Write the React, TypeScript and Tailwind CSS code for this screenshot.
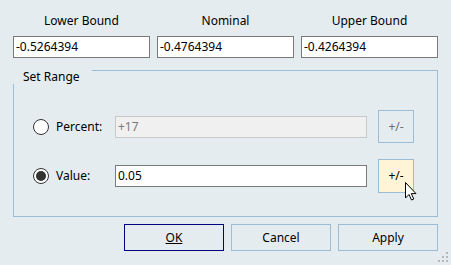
import React from "react";

function Radio({ checked }: { checked?: boolean }) {
  return (
    <span className="flex h-4 w-4 shrink-0 items-center justify-center rounded-full border border-[#333] bg-white">
      {checked && <span className="h-[10px] w-[10px] rounded-full bg-[#333]" />}
    </span>
  );
}

function Cursor() {
  return (
    <svg width="12" height="19" viewBox="0 0 12 19" className="absolute left-[26px] top-[22px]">
      <path d="M0.5 0.5V16L4 12.5L6.5 18L8.8 17L6.3 11.6H11Z" fill="#fff" stroke="#000" strokeWidth="1" strokeLinejoin="round" />
    </svg>
  );
}

function Grip() {
  const dots = [
    [8, 0], [8, 4], [4, 4], [8, 8], [4, 8], [0, 8],
  ];
  return (
    <svg width="11" height="11" viewBox="0 0 11 11" className="absolute bottom-[2px] right-[2px]">
      {dots.map(([x, y]) => (
        <rect key={`${x}-${y}`} x={x} y={y} width="2" height="2" fill="#b5b9bc" />
      ))}
    </svg>
  );
}

export default function App() {
  const bounds = [
    { label: "Lower Bound", value: "-0.5264394" },
    { label: "Nominal", value: "-0.4764394" },
    { label: "Upper Bound", value: "-0.4264394" },
  ];

  return (
    <div
      className="relative h-[265px] w-[451px] bg-[#e5ecf0] px-[13px] pt-[12px] text-[12px] text-black"
      style={{ fontFamily: "'Noto Sans', 'DejaVu Sans', sans-serif" }}
    >
      <div className="grid w-[425px] grid-cols-3 gap-[7px]">
        {bounds.map((b) => (
          <div key={b.label} className="flex flex-col">
            <span className="h-[24px] text-center leading-[18px]">{b.label}</span>
            <div className="flex h-[22px] items-center border border-[#7a7a7a] bg-white px-[2px]">{b.value}</div>
          </div>
        ))}
      </div>

      <div className="relative mt-[12px] h-[147px] w-[425px] border border-[#9bbcd5]">
        <span className="absolute left-[-1px] top-[-1px] h-[14px] w-[79px] bg-[#e5ecf0] pl-[10px] leading-[14px]">
          Set Range
        </span>
        <div className="flex flex-col gap-[16px] pl-[19px] pt-[39px]">
          <div className="flex items-center">
            <Radio />
            <span className="ml-[7px] w-[59px]">Percent:</span>
            <div className="flex h-[22px] w-[252px] items-center border border-[#c8c8c8] bg-[#f0f0f0] px-[2px] text-[#7a7a7a]">
              +17
            </div>
            <button className="ml-[11px] flex h-[33px] w-[36px] items-center justify-center border border-[#9bbcd5] text-[#6d6d6d]">
              +/-
            </button>
          </div>
          <div className="flex items-center">
            <Radio checked />
            <span className="ml-[7px] w-[59px]">Value:</span>
            <div className="flex h-[22px] w-[252px] items-center border border-[#7a7a7a] bg-white px-[2px]">0.05</div>
            <button className="relative ml-[11px] flex h-[34px] w-[36px] items-center justify-center border border-[#9bbcd5] bg-[#fff4d6]">
              +/-
              <Cursor />
            </button>
          </div>
        </div>
      </div>

      <div className="mt-[7px] flex justify-end gap-[7px]">
        <button className="h-[27px] w-[100px] border border-[#000080]">
          <span className="underline">OK</span>
        </button>
        <button className="h-[27px] w-[100px] border border-[#9bbcd5]">Cancel</button>
        <button className="h-[27px] w-[100px] border border-[#9bbcd5]">Apply</button>
      </div>

      <Grip />
    </div>
  );
}
